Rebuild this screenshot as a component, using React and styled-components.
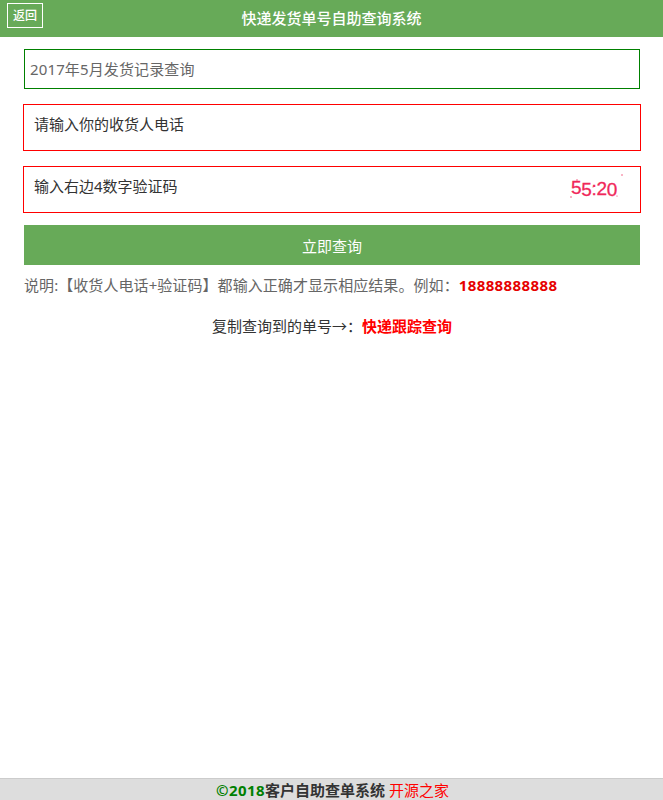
import React from "react";
import styled, { createGlobalStyle } from "styled-components";

const GlobalStyle = createGlobalStyle`
  html, body {
    margin: 0;
    padding: 0;
    height: 100%;
    background: #fff;
    font-family: "Noto Sans", "Noto Sans CJK SC", sans-serif;
  }
  * {
    box-sizing: border-box;
  }
  #root {
    height: 100%;
  }
`;

const captchaChars = [
  { ch: "5", dy: -1 },
  { ch: "5", dy: 1 },
  { ch: ":", dy: 0 },
  { ch: "2", dy: 0 },
  { ch: "0", dy: 1 },
];

const Captcha = () => (
  <CaptchaBox>
    <CaptchaText>
      {captchaChars.map((c, i) => (
        <CaptchaChar key={i} $dy={c.dy}>
          {c.ch}
        </CaptchaChar>
      ))}
    </CaptchaText>
    <Specks width="64" height="30" viewBox="0 0 64 30">
      <circle cx="60" cy="2" r="0.7" fill="#f0305f" />
      <circle cx="15" cy="7" r="0.7" fill="#f0305f" />
      <circle cx="9" cy="24" r="0.7" fill="#f0305f" />
      <circle cx="53" cy="20" r="0.6" fill="#f0305f" />
      <circle cx="55" cy="23" r="0.6" fill="#f0305f" />
      <circle cx="31" cy="14" r="0.5" fill="#f0305f" />
    </Specks>
  </CaptchaBox>
);

const App = () => {
  return (
    <Page>
      <GlobalStyle />
      <Header>
        <BackButton href="#">返回</BackButton>
        <HeaderTitle>快递发货单号自助查询系统</HeaderTitle>
      </Header>
      <Main>
        <RecordSelect>2017年5月发货记录查询</RecordSelect>
        <Field>
          <FieldInput placeholder="请输入你的收货人电话" />
        </Field>
        <Field>
          <FieldInput placeholder="输入右边4数字验证码" />
          <Captcha />
        </Field>
        <SubmitButton type="button">立即查询</SubmitButton>
        <Note>
          说明:【收货人电话+验证码】都输入正确才显示相应结果。例如：
          <NoteNumber>18888888888</NoteNumber>
        </Note>
        <CopyLine>
          复制查询到的单号→：<TrackLink href="#">快递跟踪查询</TrackLink>
        </CopyLine>
      </Main>
      <Footer>
        <FooterYear>©2018</FooterYear>
        <FooterName>客户自助查单系统</FooterName>
        <FooterLink href="#">开源之家</FooterLink>
      </Footer>
    </Page>
  );
};

export default App;

const Page = styled.div`
  display: flex;
  flex-direction: column;
  height: 800px;
  overflow: hidden;
`;

const Header = styled.header`
  position: relative;
  flex: none;
  height: 37px;
  padding-bottom: 3px;
  background-color: #67aa58;
  display: flex;
  align-items: center;
  justify-content: center;
`;

const BackButton = styled.a`
  position: absolute;
  left: 7px;
  top: 3px;
  width: 36px;
  height: 25px;
  border: 1px solid #fff;
  color: #fff;
  font-size: 12px;
  font-weight: 500;
  line-height: 23px;
  text-align: center;
  text-decoration: none;
`;

const HeaderTitle = styled.h1`
  margin: 0;
  color: #fff;
  font-size: 15px;
  font-weight: 500;
`;

const Main = styled.main`
  flex: 1;
  padding: 12px 22px 0 23px;
  display: flex;
  flex-direction: column;
`;

const RecordSelect = styled.div`
  height: 40px;
  margin: 0 1px;
  padding-left: 5px;
  border: 1px solid green;
  color: #666;
  font-size: 15px;
  letter-spacing: 0.13px;
  line-height: 38px;
`;

const Field = styled.div`
  position: relative;
  height: 47px;
  margin-top: 15px;
  border: 1px solid red;
`;

const FieldInput = styled.input`
  display: block;
  width: 100%;
  height: 100%;
  padding: 0 0 7px 10px;
  border: 0;
  outline: 0;
  background: transparent;
  font-family: inherit;
  font-size: 15px;

  &::placeholder {
    color: #333;
    opacity: 1;
  }
`;

const CaptchaBox = styled.div`
  position: absolute;
  right: 14px;
  top: 6px;
  width: 64px;
  height: 30px;
`;

const CaptchaText = styled.span`
  position: absolute;
  left: 9px;
  top: 4px;
  color: #f0285a;
  font-family: "Liberation Sans", sans-serif;
  font-size: 19px;
  letter-spacing: -0.3px;
  line-height: 24px;
  -webkit-text-stroke: 0.3px #f0285a;
  white-space: nowrap;
`;

const CaptchaChar = styled.span`
  position: relative;
  top: ${(props) => props.$dy}px;
`;

const Specks = styled.svg`
  position: absolute;
  left: 0;
  top: 0;
`;

const SubmitButton = styled.button`
  display: block;
  height: 40px;
  margin: 12px 1px 0;
  border: 0;
  background-color: #67aa58;
  color: #fff;
  font-family: inherit;
  font-size: 15px;
`;

const Note = styled.p`
  margin: 10px 0 0 1px;
  color: #666;
  font-size: 15px;
  letter-spacing: 0.07px;
  line-height: 21px;
  white-space: nowrap;
`;

const NoteNumber = styled.b`
  color: #e60000;
  letter-spacing: 0.4px;
`;

const CopyLine = styled.p`
  margin: 20px 0 0;
  color: #333;
  font-size: 15px;
  line-height: 21px;
  text-align: center;
`;

const TrackLink = styled.a`
  color: red;
  font-weight: 700;
  text-decoration: none;
`;

const Footer = styled.footer`
  flex: none;
  height: 22px;
  padding-left: 2px;
  background-color: #ddd;
  border-top: 1px solid #ccc;
  font-size: 15px;
  line-height: 23px;
  text-align: center;
  white-space: nowrap;
`;

const FooterYear = styled.b`
  color: green;
  letter-spacing: 0.4px;
`;

const FooterName = styled.b`
  color: #333;
  margin-right: 4px;
`;

const FooterLink = styled.a`
  color: red;
  text-decoration: none;
`;
